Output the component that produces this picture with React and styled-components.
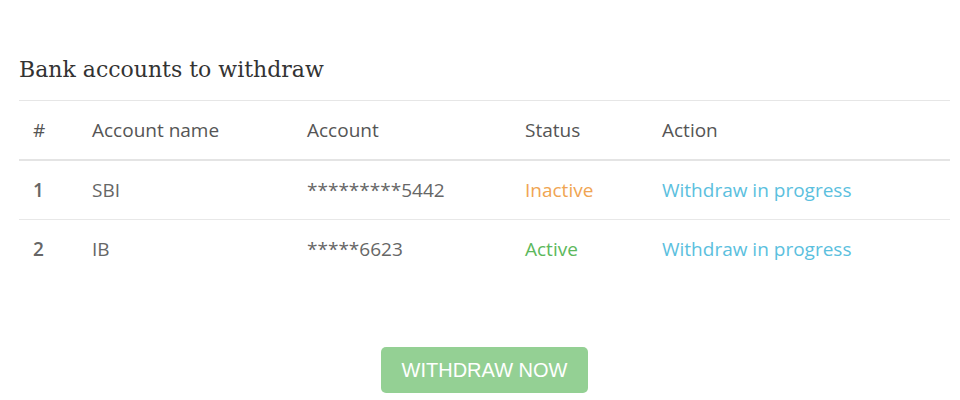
import React from 'react';
import styled, { createGlobalStyle } from 'styled-components';

const GlobalStyle = createGlobalStyle`
  body {
    margin: 0;
    background: #fff;
    font-family: 'Open Sans', 'Noto Sans', sans-serif;
  }
`;

const Wrapper = styled.div`
  padding: 54px 10px 0 19px;
  width: 931px;
  height: 400px;
  overflow: hidden;
  box-sizing: border-box;
  width: 960px;
`;

const Title = styled.h3`
  margin: 0;
  padding-bottom: 14px;
  font-family: 'DejaVu Serif', 'Liberation Serif', serif;
  font-size: 22px;
  font-weight: normal;
  color: #333;
  border-bottom: 1px solid #e6e6e6;
  line-height: 32px;
`;

const Row = styled.div`
  display: grid;
  grid-template-columns: 59px 215px 218px 137px 1fr;
  height: 58px;
  align-items: center;
  border-bottom: ${(p) => (p.$head ? '2px solid #e4e4e4' : '1px solid #e8e8e8')};
  border-bottom-width: ${(p) => (p.$last ? '0' : undefined)};
`;

const Cell = styled.div`
  padding-left: 14px;
  font-size: 19px;
  color: ${(p) => p.$color || '#666'};
  font-weight: ${(p) => (p.$bold ? 600 : 400)};
  white-space: nowrap;
`;

const HeadCell = styled(Cell)`
  color: #555;
  font-weight: 500;
`;

const Footer = styled.div`
  display: flex;
  justify-content: center;
  padding-top: 69px;
`;

const Button = styled.button`
  width: 207px;
  height: 46px;
  border: none;
  border-radius: 5px;
  background: #5cb85c;
  opacity: 0.65;
  color: #fff;
  font-family: 'Liberation Sans', Arial, sans-serif;
  font-size: 20px;
  cursor: not-allowed;
`;

const accounts = [
  { id: 1, name: 'SBI', account: '*********5442', status: 'Inactive' },
  { id: 2, name: 'IB', account: '*****6623', status: 'Active' },
];

export default function App() {
  return (
    <>
      <GlobalStyle />
      <Wrapper>
        <Title>Bank accounts to withdraw</Title>
        <Row $head>
          <HeadCell>#</HeadCell>
          <HeadCell>Account name</HeadCell>
          <HeadCell>Account</HeadCell>
          <HeadCell>Status</HeadCell>
          <HeadCell>Action</HeadCell>
        </Row>
        {accounts.map((a, i) => (
          <Row key={a.id} $last={i === accounts.length - 1}>
            <Cell $bold>{a.id}</Cell>
            <Cell>{a.name}</Cell>
            <Cell>{a.account}</Cell>
            <Cell $color={a.status === 'Active' ? '#5cb85c' : '#f0a552'}>{a.status}</Cell>
            <Cell $color="#5bc0de">Withdraw in progress</Cell>
          </Row>
        ))}
        <Footer>
          <Button disabled>WITHDRAW NOW</Button>
        </Footer>
      </Wrapper>
    </>
  );
}
